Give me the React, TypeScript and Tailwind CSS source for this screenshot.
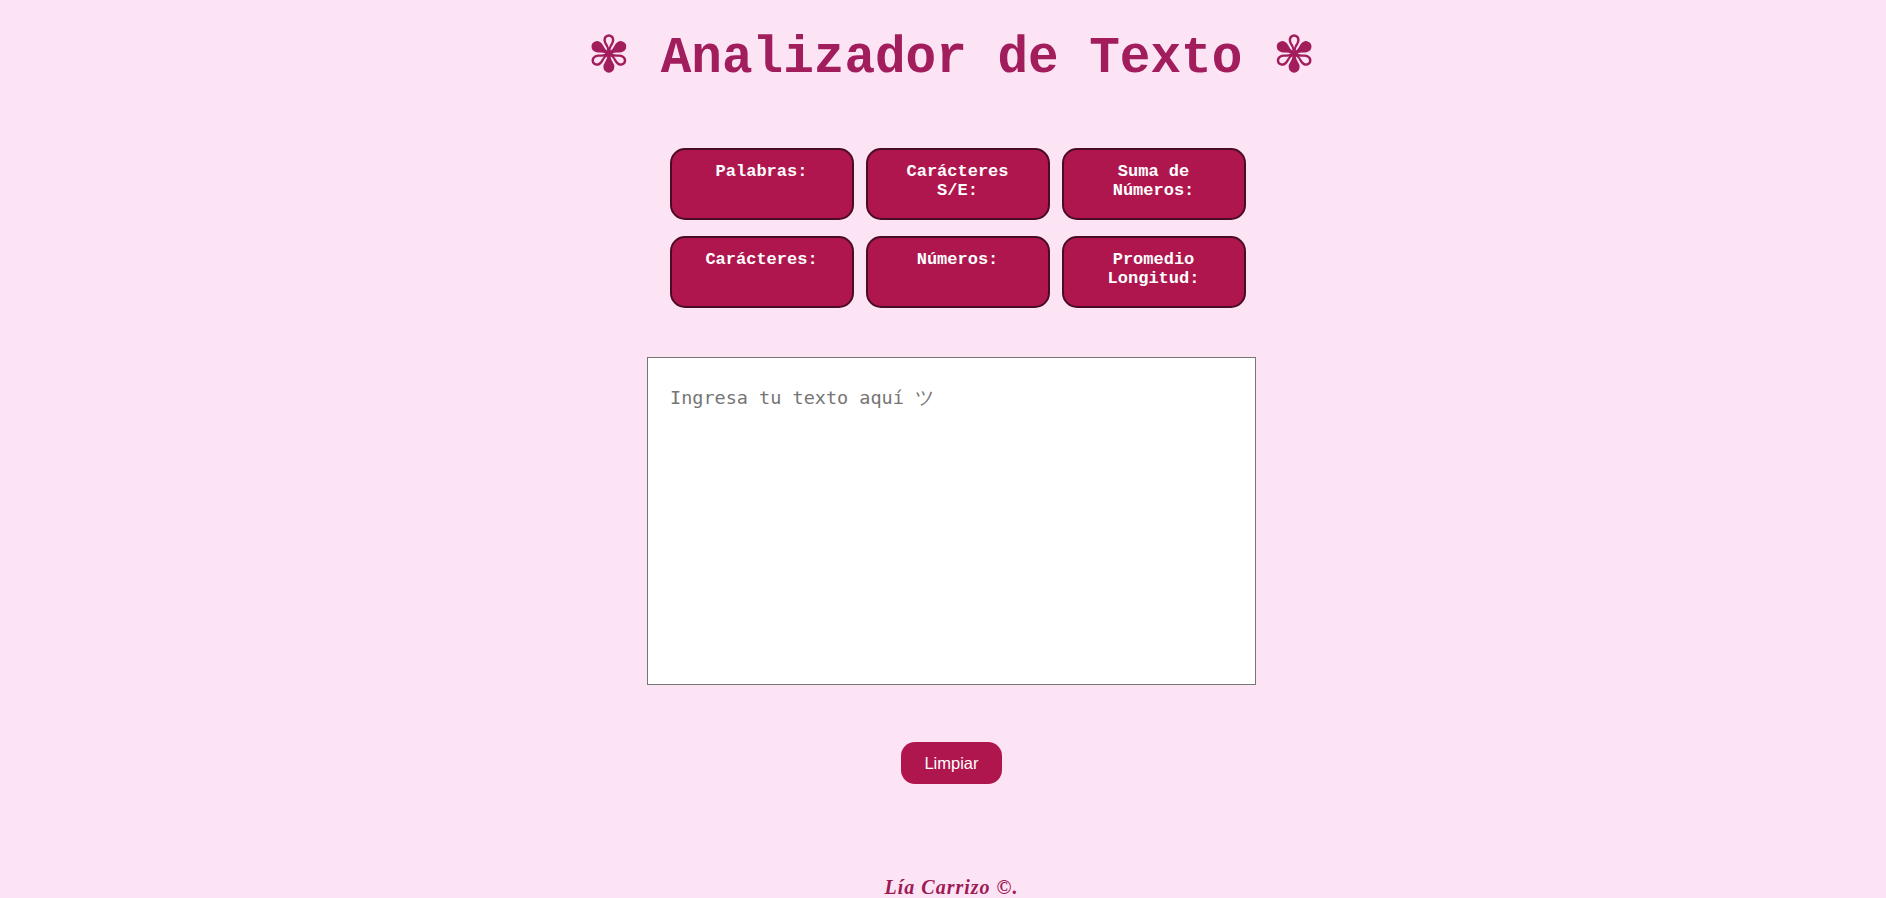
import React from "react";

const cards = [
  ["Palabras:"],
  ["Carácteres", "S/E:"],
  ["Suma de", "Números:"],
  ["Carácteres:"],
  ["Números:"],
  ["Promedio", "Longitud:"],
];

export default function App() {
  return (
    <div className="min-h-[898px] w-full bg-[#fde4f5] flex flex-col items-center pl-[17px]">
      <h1 className="mt-[20px] h-[70px] text-[51px] leading-[70px] font-bold text-[#a21d5c] [font-family:'Liberation_Mono',monospace] whitespace-pre">
        <span className="[font-family:'DejaVu_Sans',sans-serif] font-normal">✾</span> Analizador de Texto <span className="[font-family:'DejaVu_Sans',sans-serif] font-normal">✾</span>
      </h1>

      <div className="mt-[58px] ml-[12px] grid grid-cols-3 gap-x-[12px] gap-y-[16px]">
        {cards.map((lines, i) => (
          <div
            key={i}
            className="w-[184px] h-[72px] rounded-[15px] border-2 border-[#4a0b24] bg-[#b0164e] text-white text-center pt-[12px] text-[17px] leading-[19px] font-bold [font-family:'Liberation_Mono',monospace]"
          >
            {lines.map((l, j) => (
              <div key={j}>{l}</div>
            ))}
          </div>
        ))}
      </div>

      <textarea
        className="mt-[49px] w-[609px] h-[328px] bg-white border border-[#767676] resize-none pl-[22px] pr-[19px] pt-[28px] text-[18.5px] leading-[24px] text-black placeholder:text-[#757575] [font-family:'DejaVu_Sans_Mono',monospace] outline-none"
        placeholder="Ingresa tu texto aquí ツ"
      />

      <button className="mt-[57px] w-[101px] h-[42px] rounded-[14px] bg-[#b0164e] text-white text-[16.5px] [font-family:'Liberation_Sans',Arial,sans-serif]">
        Limpiar
      </button>

      <footer className="mt-[90px] text-[20px] leading-[26px] tracking-[1px] font-bold italic text-[#9e1a55] [font-family:'Liberation_Serif',serif]">
        Lía Carrizo ©.
      </footer>
    </div>
  );
}
